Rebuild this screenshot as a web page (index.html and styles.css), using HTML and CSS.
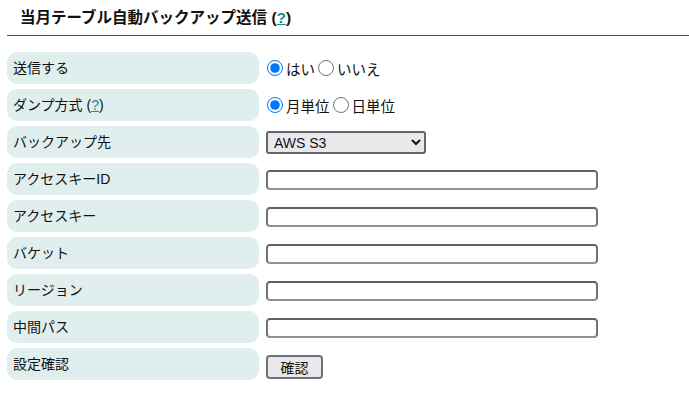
FILE: index.html
```html
<!DOCTYPE html>
<html lang="ja">
<head>
  <meta charset="UTF-8" />
  <title>当月テーブル自動バックアップ送信</title>
  <link rel="stylesheet" href="styles.css">
</head>
<body>

  <!-- Header -->
  <h2 class="title">当月テーブル自動バックアップ送信 (<a href="#" class="help">?</a>)</h2>

  <!-- Settings -->
  <div class="settings">
    <div class="label">送信する</div>
    <div class="field">
      <label><input type="radio" name="send" checked>はい</label>
      <label><input type="radio" name="send">いいえ</label>
    </div>

    <div class="label">ダンプ方式 (<a href="#" class="help">?</a>)</div>
    <div class="field">
      <label><input type="radio" name="dump" checked>月単位</label>
      <label><input type="radio" name="dump">日単位</label>
    </div>

    <div class="label">バックアップ先</div>
    <div class="field">
      <select class="dest">
        <option>AWS S3</option>
      </select>
    </div>

    <div class="label">アクセスキーID</div>
    <div class="field"><input type="text" class="text"></div>

    <div class="label">アクセスキー</div>
    <div class="field"><input type="text" class="text"></div>

    <div class="label">バケット</div>
    <div class="field"><input type="text" class="text"></div>

    <div class="label">リージョン</div>
    <div class="field"><input type="text" class="text"></div>

    <div class="label">中間パス</div>
    <div class="field"><input type="text" class="text"></div>

    <div class="label">設定確認</div>
    <div class="field"><button class="check">確認</button></div>
  </div>

</body>
</html>
```

FILE: styles.css
```css
body {
  font-family: "Liberation Sans", Arial, "Noto Sans CJK JP", sans-serif;
  margin: 0;
  padding: 0 0 0 7px;
  color: #111;
  font-size: 14px;
}

/* Header */
.title {
  font-size: 15.5px;
  margin: 0;
  padding: 8px 0 7px 13px;
  line-height: 20px;
  border-bottom: 1px solid #1f6b63;
}

.help {
  color: #1a8c96;
}

.settings {
  display: grid;
  grid-template-columns: 252px 1fr;
  column-gap: 6px;
  row-gap: 5px;
  margin-top: 16px;
  align-items: center;
}

.label {
  background-color: #e0eeee;
  border-radius: 10px;
  height: 32px;
  line-height: 32px;
  padding-left: 6px;
}

.field {
  display: flex;
  align-items: center;
  font-size: 14.5px;
}

.field label {
  display: flex;
  align-items: center;
  margin-right: 1px;
}

input[type="radio"] {
  width: 16px;
  height: 16px;
  margin: 0 3px 0 2px;
}

.dest {
  width: 160px;
  height: 23px;
  font-family: "Liberation Sans", Arial, sans-serif;
  font-size: 14px;
  color: #111;
  border: 2px solid #666;
  border-radius: 3px;
  background: #e9e9ed;
  margin: 1px 0 0 1px;
  padding: 0 2px;
}

.text {
  width: 332px;
  height: 20px;
  box-sizing: border-box;
  border: 2px solid #707078;
  border-top-color: #5f5f66;
  border-bottom-color: #8f8f9d;
  border-radius: 4px;
  margin: 2px 0 0 1px;
}

.check {
  font-family: "Liberation Sans", "Noto Sans CJK JP", sans-serif;
  font-size: 14px;
  color: #111;
  width: 57px;
  height: 24px;
  background: #e9e9ed;
  border: 2px solid #707078;
  border-radius: 4px;
  margin: 6px 0 0 1px;
  padding: 0;
}
```
